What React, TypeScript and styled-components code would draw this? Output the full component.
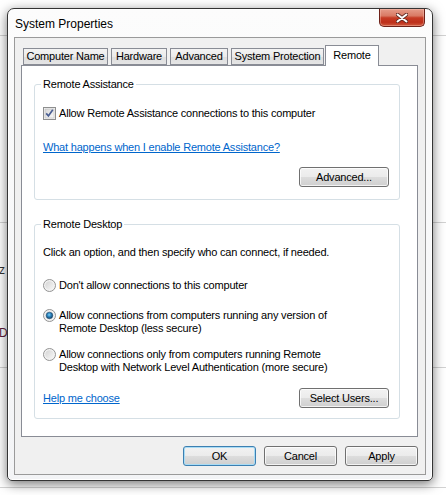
import React from 'react';
import styled, { createGlobalStyle } from 'styled-components';

const GlobalStyle = createGlobalStyle`
  html, body { margin: 0; padding: 0; }
  body {
    background: #fff;
    font-family: "Liberation Sans", Arial, sans-serif;
    font-size: 11px;
    letter-spacing: -0.2px;
    color: #000;
  }
`;

const Desktop = styled.div`
  position: relative;
  width: 446px;
  height: 495px;
  overflow: hidden;
  box-sizing: border-box;
  padding: 8px 0 0 7px;
  background:
    linear-gradient(#d2d2d2, #d2d2d2) 0 35px / 100% 1px no-repeat,
    linear-gradient(#d2d2d2, #d2d2d2) 0 222px / 100% 1px no-repeat,
    linear-gradient(#d2d2d2, #d2d2d2) 0 367px / 100% 1px no-repeat,
    linear-gradient(#d2d2d2, #d2d2d2) 0 487px / 100% 1px no-repeat,
    #fff;
`;

const BehindText = styled.span<{ $top: number; $color: string }>`
  position: absolute;
  left: -1px;
  top: ${p => p.$top}px;
  font-size: 12px;
  color: ${p => p.$color};
`;

const Window = styled.div`
  position: relative;
  z-index: 1;
  width: 426px;
  height: 473px;
  box-sizing: border-box;
  border: 1px solid #343434;
  border-radius: 7px 7px 5px 5px;
  background: linear-gradient(180deg, #fcfcfc 0%, #f3f4f6 100%);
  box-shadow: 0 3px 12px rgba(0, 0, 0, 0.55), inset 0 0 0 1px rgba(255, 255, 255, 0.95);
  padding: 0 6px 5px 6px;
  display: flex;
  flex-direction: column;
`;

const TitleBar = styled.div`
  height: 28px;
  display: flex;
  justify-content: space-between;
  align-items: flex-start;
`;

const Title = styled.div`
  margin: 7px 0 0 1px;
  font-size: 12px;
  letter-spacing: 0;
  line-height: 16px;
`;

const CloseButton = styled.div`
  width: 46px;
  height: 18px;
  margin-right: 1px;
  box-sizing: border-box;
  border: 1px solid #6e2219;
  border-top: none;
  border-radius: 0 0 5px 5px;
  background: linear-gradient(180deg, #e59c8a 0%, #d97a64 40%, #c63c25 52%, #bd2f1a 78%, #cf5a3e 100%);
  box-shadow: inset 0 0 0 1px rgba(255, 200, 185, 0.4);
  display: flex;
  align-items: center;
  justify-content: center;
`;

const Client = styled.div`
  flex: 1;
  box-sizing: border-box;
  border: 1px solid #9a9a9a;
  background: #f0f0f0;
  padding: 7px 7px 0 6px;
  display: flex;
  flex-direction: column;
`;

const TabStrip = styled.div`
  display: flex;
  align-items: flex-end;
  gap: 3px;
  height: 21px;
  padding-left: 2px;
  margin-bottom: -1px;
  position: relative;
  z-index: 2;
`;

const Tab = styled.div<{ $w: number; $active?: boolean }>`
  width: ${p => p.$w}px;
  box-sizing: border-box;
  height: ${p => (p.$active ? 21 : 17)}px;
  margin-bottom: ${p => (p.$active ? 0 : 1)}px;
  margin-left: ${p => (p.$active ? -2 : 0)}px;
  border: 1px solid #898c95;
  border-bottom: ${p => (p.$active ? 'none' : '1px solid #898c95')};
  background: ${p => (p.$active ? '#fff' : 'linear-gradient(180deg, #f3f3f3 0%, #ebebeb 50%, #dedede 50%, #e5e5e5 100%)')};
  display: flex;
  align-items: ${p => (p.$active ? 'flex-start' : 'center')};
  padding-top: ${p => (p.$active ? 3 : 0)}px;
  justify-content: center;
  line-height: 13px;
  white-space: nowrap;
`;

const TabPage = styled.div`
  height: 372px;
  box-sizing: border-box;
  border: 1px solid #898c95;
  background: #fff;
  padding: 12px 0 0 12px;
`;

const Group = styled.fieldset<{ $top?: number }>`
  width: 366px;
  box-sizing: border-box;
  min-width: 0;
  margin: ${p => p.$top || 0}px 0 0 0;
  padding: 0 10px 12px 8px;
  border: 1px solid #d5dfe5;
  border-radius: 3px;
  display: flex;
  flex-direction: column;
  align-items: flex-start;
`;

const GroupBottom = styled(Group)`
  padding-bottom: 10px;
`;

const Legend = styled.legend`
  padding: 0 2px;
  margin-left: -2px;
  line-height: 13px;
`;

const Option = styled.label<{ $gap: number }>`
  display: flex;
  align-items: flex-start;
  gap: 3px;
  margin-top: ${p => p.$gap}px;
  line-height: 13px;
`;

const Text = styled.div<{ $gap: number }>`
  margin-top: ${p => p.$gap}px;
  line-height: 13px;
`;

const Link = styled.a<{ $gap?: number }>`
  margin-top: ${p => p.$gap || 0}px;
  line-height: 13px;
  color: #0066cc;
  text-decoration: underline;
  cursor: pointer;
`;

const ButtonRow = styled.div<{ $gap: number; $split?: boolean }>`
  align-self: stretch;
  margin-top: ${p => p.$gap}px;
  display: flex;
  align-items: center;
  justify-content: ${p => (p.$split ? 'space-between' : 'flex-end')};
`;

const Button = styled.button<{ $w: number; $focus?: boolean }>`
  width: ${p => p.$w}px;
  height: 20px;
  box-sizing: border-box;
  padding: 0;
  font-family: "Liberation Sans", Arial, sans-serif;
  font-size: 11px;
  letter-spacing: -0.2px;
  color: #000;
  border: 1px solid ${p => (p.$focus ? '#3c7fb1' : '#707070')};
  border-radius: 3px;
  background: linear-gradient(180deg, #f2f2f2 0%, #ebebeb 50%, #dddddd 50%, #cfcfcf 100%);
  box-shadow: inset 0 0 0 1px ${p => (p.$focus ? '#a9dcf5' : 'rgba(255, 255, 255, 0.75)')};
`;

const Footer = styled.div`
  display: flex;
  justify-content: flex-end;
  gap: 8px;
  margin-top: 9px;
`;

const CheckBox = () => (
  <svg width="13" height="13" viewBox="0 0 13 13">
    <defs>
      <linearGradient id="cbg" x1="0" y1="0" x2="1" y2="1">
        <stop offset="0" stopColor="#d6d6d6" />
        <stop offset="1" stopColor="#fbfbfb" />
      </linearGradient>
    </defs>
    <rect x="0.5" y="0.5" width="12" height="12" fill="#f4f4f4" stroke="#8e8f8f" />
    <rect x="2" y="2" width="9" height="9" fill="url(#cbg)" stroke="#bdbdbd" strokeWidth="0.6" />
    <path d="M3.2 6.4 L5.4 8.9 L9.8 2.8" fill="none" stroke="#4a5f93" strokeWidth="1.7" />
  </svg>
);

const Radio = ({ on }: { on?: boolean }) => (
  <svg width="13" height="13" viewBox="0 0 13 13">
    <defs>
      <linearGradient id="rbg" x1="0" y1="0" x2="1" y2="1">
        <stop offset="0" stopColor="#d4d4d4" />
        <stop offset="1" stopColor="#f7f7f7" />
      </linearGradient>
      <radialGradient id="rdot" cx="0.45" cy="0.4" r="0.6">
        <stop offset="0" stopColor="#7fd3f7" />
        <stop offset="0.45" stopColor="#2f86c0" />
        <stop offset="1" stopColor="#133f63" />
      </radialGradient>
    </defs>
    <circle cx="6.5" cy="6.5" r="6" fill="#f2f2f2" stroke="#939393" />
    <circle cx="6.5" cy="6.5" r="4.3" fill="url(#rbg)" />
    {on && <circle cx="6.5" cy="6.5" r="3.3" fill="url(#rdot)" stroke="#1a4a70" strokeWidth="0.5" />}
  </svg>
);

const CloseGlyph = () => (
  <svg width="12" height="10" viewBox="0 0 12 10">
    <path d="M1.5 1.5 L10.5 8.5 M10.5 1.5 L1.5 8.5" stroke="#5e2a22" strokeWidth="3.6" strokeLinecap="round" />
    <path d="M1.5 1.5 L10.5 8.5 M10.5 1.5 L1.5 8.5" stroke="#ffffff" strokeWidth="2" strokeLinecap="round" />
  </svg>
);

const tabs = [
  { label: 'Computer Name', w: 85 },
  { label: 'Hardware', w: 56 },
  { label: 'Advanced', w: 58 },
  { label: 'System Protection', w: 93 },
  { label: 'Remote', w: 54, active: true },
];

const App = () => {
  return (
    <>
      <GlobalStyle />
      <Desktop>
        <BehindText $top={263} $color="#333">z</BehindText>
        <BehindText $top={326} $color="#5a1d3a">D</BehindText>
        <Window>
          <TitleBar>
            <Title>System Properties</Title>
            <CloseButton>
              <CloseGlyph />
            </CloseButton>
          </TitleBar>
          <Client>
            <TabStrip>
              {tabs.map(t => (
                <Tab key={t.label} $w={t.w} $active={t.active}>{t.label}</Tab>
              ))}
            </TabStrip>
            <TabPage>
              <Group>
                <Legend>Remote Assistance</Legend>
                <Option $gap={16}>
                  <CheckBox />
                  <span>Allow Remote Assistance connections to this computer</span>
                </Option>
                <Link $gap={21}>What happens when I enable Remote Assistance?</Link>
                <ButtonRow $gap={13}>
                  <Button $w={90}>Advanced...</Button>
                </ButtonRow>
              </Group>
              <GroupBottom $top={18}>
                <Legend>Remote Desktop</Legend>
                <Text $gap={15}>Click an option, and then specify who can connect, if needed.</Text>
                <Option $gap={20}>
                  <Radio />
                  <span>Don't allow connections to this computer</span>
                </Option>
                <Option $gap={17}>
                  <Radio on />
                  <span>Allow connections from computers running any version of<br />Remote Desktop (less secure)</span>
                </Option>
                <Option $gap={13}>
                  <Radio />
                  <span>Allow connections only from computers running Remote<br />Desktop with Network Level Authentication (more secure)</span>
                </Option>
                <ButtonRow $gap={14} $split>
                  <Link>Help me choose</Link>
                  <Button $w={90}>Select Users...</Button>
                </ButtonRow>
              </GroupBottom>
            </TabPage>
            <Footer>
              <Button $w={73} $focus>OK</Button>
              <Button $w={73}>Cancel</Button>
              <Button $w={73}>Apply</Button>
            </Footer>
          </Client>
        </Window>
      </Desktop>
    </>
  );
};

export default App;
